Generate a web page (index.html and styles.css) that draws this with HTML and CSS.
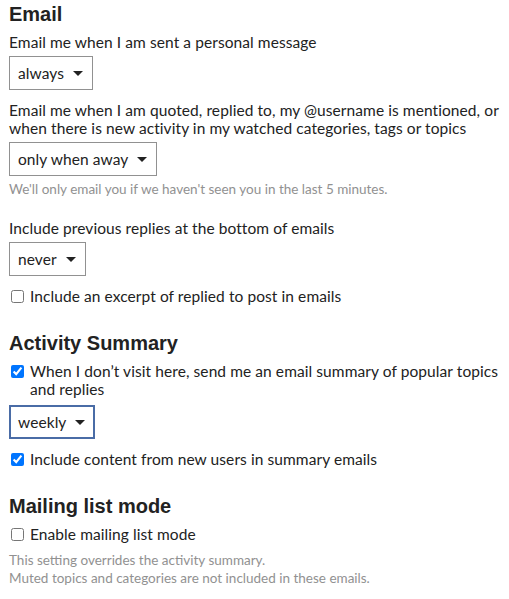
FILE: index.html
```html
<!DOCTYPE html>
<html lang="en">
<head>
    <meta charset="UTF-8">
    <title>Email preferences</title>
    <link rel="stylesheet" href="styles.css">
</head>
<body>

<section class="group">
    <h2>Email</h2>
    <div class="control">
        <label class="label">Email me when I am sent a personal message</label>
        <div class="select"><span>always</span><span class="caret"></span></div>
    </div>
    <div class="control">
        <label class="label">Email me when I am quoted, replied to, my @username is mentioned, or when there is new activity in my watched categories, tags or topics</label>
        <div class="select"><span>only when away</span><span class="caret"></span></div>
        <p class="hint">We'll only email you if we haven't seen you in the last 5 minutes.</p>
    </div>
    <div class="control spaced">
        <label class="label">Include previous replies at the bottom of emails</label>
        <div class="select"><span>never</span><span class="caret"></span></div>
    </div>
    <label class="check"><input type="checkbox"><span>Include an excerpt of replied to post in emails</span></label>
</section>

<section class="group">
    <h2>Activity Summary</h2>
    <label class="check"><input type="checkbox" checked><span>When I don’t visit here, send me an email summary of popular topics and replies</span></label>
    <div class="select focused"><span>weekly</span><span class="caret"></span></div>
    <label class="check"><input type="checkbox" checked><span>Include content from new users in summary emails</span></label>
</section>

<section class="group">
    <h2>Mailing list mode</h2>
    <label class="check"><input type="checkbox"><span>Enable mailing list mode</span></label>
    <p class="hint note">This setting overrides the activity summary.<br>Muted topics and categories are not included in these emails.</p>
</section>

</body>
</html>
```

FILE: styles.css
```css
body {
    margin: 0;
    padding: 0 9px;
    font-family: Lato, "Open Sans", sans-serif;
    font-size: 15.5px;
    letter-spacing: 0.08px;
    line-height: 18px;
    color: #222;
    background-color: white;
}
h2 {
    font-family: "Liberation Sans", Arial, sans-serif;
    font-size: 20px;
    line-height: 24px;
    letter-spacing: 0;
    margin: 2px 0 7px;
    color: #222;
}
.group {
    margin-bottom: 26px;
}
.control {
    margin-bottom: 11px;
}
.control.spaced {
    margin-top: 21px;
}
.label {
    display: block;
    margin-bottom: 5px;
}
.select {
    display: inline-flex;
    align-items: center;
    gap: 9px;
    height: 34px;
    box-sizing: border-box;
    padding: 0 9px 0 8px;
    border: 1px solid #919191;
    background-color: white;
}
.select.focused {
    border: 2px solid #4a6ca6;
    padding: 0 8px 0 7px;
    margin: 3px 0 11px;
}
.caret {
    width: 0;
    height: 0;
    border-left: 5px solid transparent;
    border-right: 5px solid transparent;
    border-top: 5px solid #222;
}
.hint {
    margin: 4px 0 0;
    font-size: 13.5px;
    letter-spacing: 0;
    line-height: 18px;
    color: #919191;
}
.hint.note {
    margin-top: 8px;
}
.check {
    display: flex;
    align-items: flex-start;
    gap: 5px;
    margin-bottom: 4px;
}
.check input {
    margin: 3px 1px 0 2px;
    width: 13px;
    height: 13px;
    flex-shrink: 0;
}
```
